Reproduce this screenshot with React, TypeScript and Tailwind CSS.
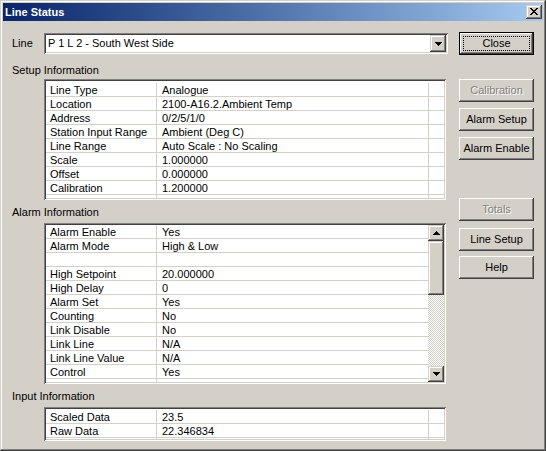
import React from 'react';

// classic 3D edges
const raised = 'shadow-[inset_-1px_-1px_0_#404040,inset_1px_1px_0_#ffffff,inset_-2px_-2px_0_#808080]';
const raisedSmall =
  'shadow-[inset_-1px_-1px_0_#404040,inset_1px_1px_0_#d4d0c8,inset_-2px_-2px_0_#808080,inset_2px_2px_0_#ffffff]';
const sunken =
  'shadow-[inset_1px_1px_0_#808080,inset_-1px_-1px_0_#ffffff,inset_2px_2px_0_#404040,inset_-2px_-2px_0_#d4d0c8]';

const setupRows = [
  ['Line Type', 'Analogue'],
  ['Location', '2100-A16.2.Ambient Temp'],
  ['Address', '0/2/5/1/0'],
  ['Station Input Range', 'Ambient (Deg C)'],
  ['Line Range', 'Auto Scale : No Scaling'],
  ['Scale', '1.000000'],
  ['Offset', '0.000000'],
  ['Calibration', '1.200000'],
  ['', ''],
];

const alarmRows = [
  ['Alarm Enable', 'Yes'],
  ['Alarm Mode', 'High & Low'],
  ['', ''],
  ['High Setpoint', '20.000000'],
  ['High Delay', '0'],
  ['Alarm Set', 'Yes'],
  ['Counting', 'No'],
  ['Link Disable', 'No'],
  ['Link Line', 'N/A'],
  ['Link Line Value', 'N/A'],
  ['Control', 'Yes'],
  ['Auto Reset Flag', 'N/A'],
];

const inputRows = [
  ['Scaled Data', '23.5'],
  ['Raw Data', '22.346834'],
  ['', ''],
];

function Arrow({ up = false }: { up?: boolean }) {
  const widths = up ? [1, 3, 5, 7] : [7, 5, 3, 1];
  return (
    <svg width="7" height="4" shapeRendering="crispEdges">
      {widths.map((w, i) => (
        <rect key={i} x={(7 - w) / 2} y={i} width={w} height={1} fill="#000" />
      ))}
    </svg>
  );
}

function CloseGlyph() {
  const rows = [0, 1, 2, 3, 4, 5, 6];
  return (
    <svg width="8" height="7" shapeRendering="crispEdges">
      {rows.map((i) => (
        <g key={i}>
          <rect x={i} y={i} width={2} height={1} fill="#000" />
          <rect x={6 - i} y={i} width={2} height={1} fill="#000" />
        </g>
      ))}
    </svg>
  );
}

function Row({ a, b, extra }: { a: string; b: string; extra: boolean }) {
  return (
    <div className="flex h-[14px] shrink-0 border-b border-[#d4d0c8] leading-[14px]">
      <div className="w-[111px] shrink-0 overflow-hidden whitespace-nowrap border-r border-[#d4d0c8] pl-[4px]">{a}</div>
      {extra ? (
        <>
          <div className="w-[272px] shrink-0 overflow-hidden whitespace-nowrap border-r border-[#d4d0c8] pl-[5px]">{b}</div>
          <div className="flex-1" />
        </>
      ) : (
        <div className="flex-1 overflow-hidden whitespace-nowrap pl-[5px]">{b}</div>
      )}
    </div>
  );
}

function Label({ text, className }: { text: string; className: string }) {
  return <div className={`pl-[9px] leading-[13px] ${className}`}>{text}</div>;
}

function Button({ label, className, disabled = false }: { label: string; className: string; disabled?: boolean }) {
  return (
    <div
      className={`flex h-[23px] items-center justify-center bg-[#d4d0c8] ${raised} ${
        disabled ? 'text-[#808080] [text-shadow:1px_1px_0_#ffffff]' : ''
      } ${className}`}
    >
      {label}
    </div>
  );
}

export default function App() {
  return (
    <div
      className="flex h-[451px] w-[546px] flex-col bg-[#d4d0c8] p-[3px] font-['Liberation_Sans',Arial,sans-serif] text-[11px] text-black shadow-[inset_-1px_-1px_0_#404040,inset_1px_1px_0_#d4d0c8,inset_-2px_-2px_0_#808080,inset_2px_2px_0_#ffffff]"
    >
      {/* Title bar */}
      <div className="flex h-[18px] shrink-0 items-center bg-linear-to-r from-[#0a246a] to-[#a6caf0] pl-[2px] pr-[1px]">
        <span className="flex-1 font-bold text-white">Line Status</span>
        <div className={`flex h-[14px] w-[16px] items-center justify-center bg-[#d4d0c8] pb-px ${raisedSmall}`}>
          <CloseGlyph />
        </div>
      </div>

      <div className="flex flex-1">
        {/* Left side */}
        <div className="flex w-[445px] shrink-0 flex-col">
          <div className="mt-[12px] flex h-[21px] items-center">
            <span className="w-[41px] shrink-0 pl-[9px]">Line</span>
            <div className={`h-[21px] w-[404px] p-[2px] ${sunken}`}>
              <div className="flex h-full items-center bg-white">
                <span className="flex-1 pl-[2px]">P 1 L 2 - South West Side</span>
                <div className={`flex h-full w-[16px] items-center justify-center bg-[#d4d0c8] ${raisedSmall}`}>
                  <Arrow />
                </div>
              </div>
            </div>
          </div>

          <Label text="Setup Information" className="mt-[10px]" />
          <div className={`ml-[41px] mt-[2px] h-[121px] w-[402px] p-[2px] ${sunken}`}>
            <div className="flex h-full flex-col overflow-hidden bg-white pt-[2px]">
              {setupRows.map(([a, b], i) => (
                <Row key={i} a={a} b={b} extra />
              ))}
            </div>
          </div>

          <Label text="Alarm Information" className="mt-[6px]" />
          <div className={`ml-[41px] mt-[4px] h-[161px] w-[402px] p-[2px] ${sunken}`}>
            <div className="flex h-full bg-white">
              <div className="flex flex-1 flex-col overflow-hidden">
                {alarmRows.map(([a, b], i) => (
                  <Row key={i} a={a} b={b} extra={false} />
                ))}
              </div>
              <div className="flex w-[16px] shrink-0 flex-col">
                <div className={`flex h-[16px] shrink-0 items-center justify-center bg-[#d4d0c8] ${raisedSmall}`}>
                  <Arrow up />
                </div>
                <div className={`h-[54px] shrink-0 bg-[#d4d0c8] ${raisedSmall}`} />
                <div className="flex-1 bg-[repeating-conic-gradient(#d4d0c8_0%_25%,#ffffff_0%_50%)] bg-[length:2px_2px]" />
                <div className={`flex h-[16px] shrink-0 items-center justify-center bg-[#d4d0c8] ${raisedSmall}`}>
                  <Arrow />
                </div>
              </div>
            </div>
          </div>

          <Label text="Input Information" className="mt-[6px]" />
          <div className={`ml-[41px] mt-[4px] h-[34px] w-[402px] p-[2px] ${sunken}`}>
            <div className="flex h-full flex-col overflow-hidden bg-white pt-[1px]">
              {inputRows.map(([a, b], i) => (
                <Row key={i} a={a} b={b} extra />
              ))}
            </div>
          </div>
        </div>

        {/* Buttons */}
        <div className="ml-[11px] flex w-[75px] shrink-0 flex-col">
          <div className="relative mt-[11px] h-[23px] border border-black">
            <div className={`flex h-full items-center justify-center bg-[#d4d0c8] ${raised}`}>Close</div>
            <span className="absolute inset-[3px] border border-dotted border-black" />
          </div>
          <Button label="Calibration" className="mt-[24px]" disabled />
          <Button label="Alarm Setup" className="mt-[6px]" />
          <Button label="Alarm Enable" className="mt-[6px]" />
          <Button label="Totals" className="mt-[38px]" disabled />
          <Button label="Line Setup" className="mt-[7px]" />
          <Button label="Help" className="mt-[5px]" />
        </div>
      </div>
    </div>
  );
}
